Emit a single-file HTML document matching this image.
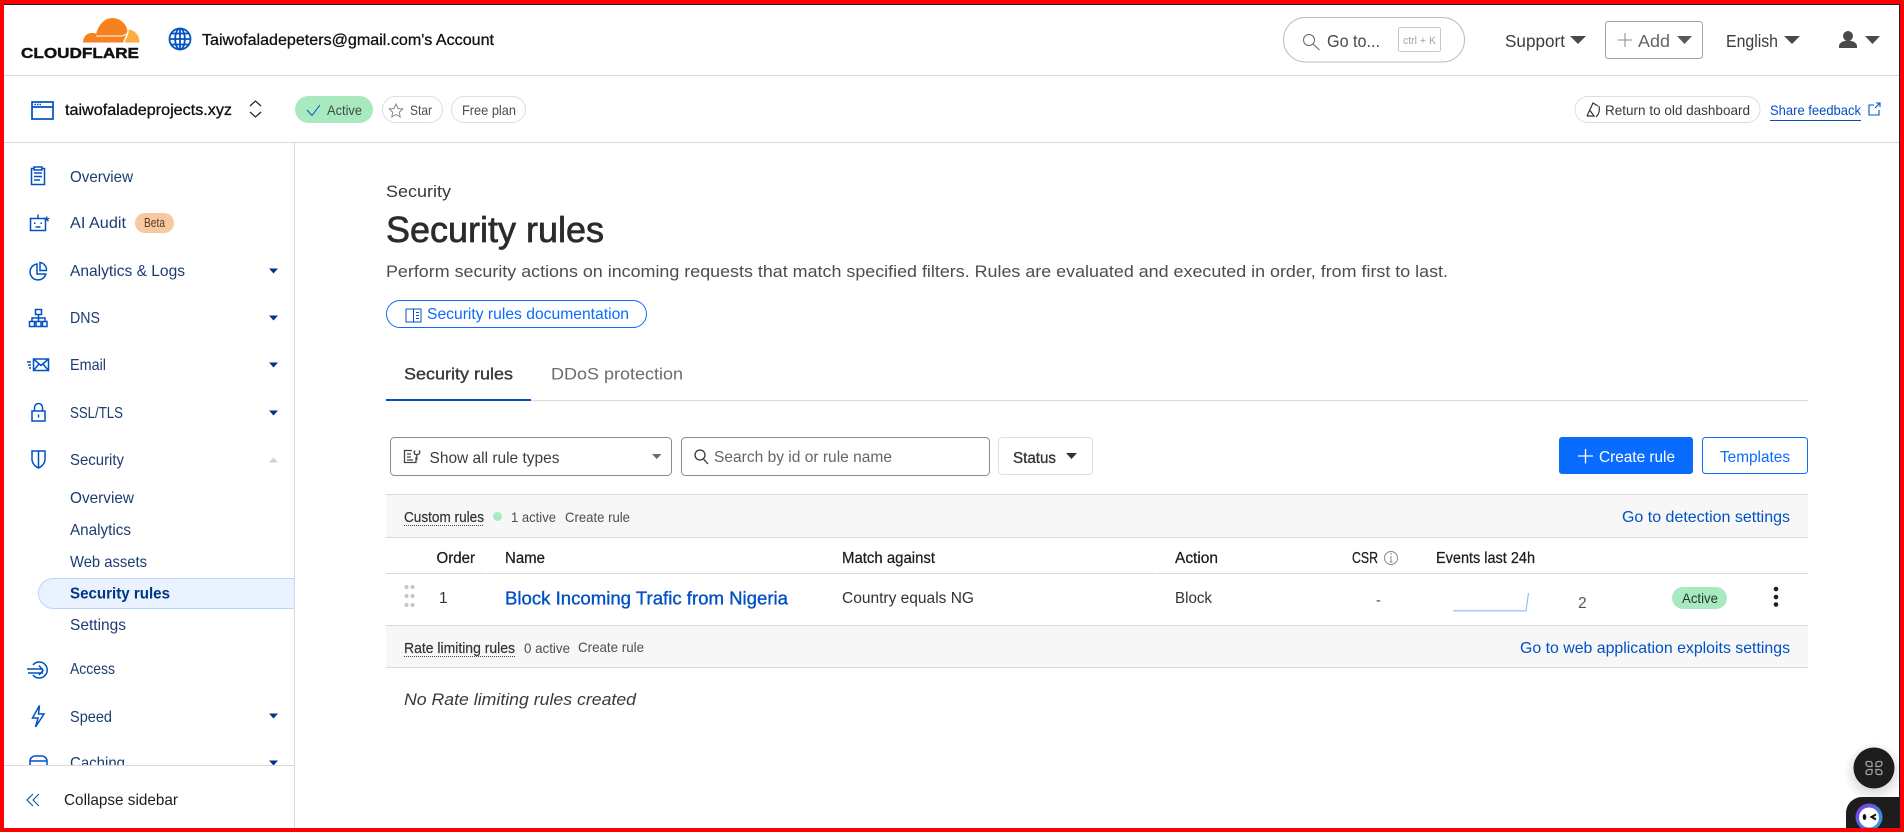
<!DOCTYPE html>
<html lang="en"><head><meta charset="utf-8"><title>Security rules | Cloudflare</title>
<style>
html,body{margin:0;padding:0;background:#fff;width:1904px;height:832px;overflow:hidden}
svg{display:block;position:absolute;left:0;top:0}
text{font-family:"Liberation Sans",sans-serif;white-space:pre}
.n{fill:#1c3c72;font-size:16px}
.m{stroke-width:.3px}
.ic{fill:none;stroke:#0051c3;stroke-width:1.5}
.hd{fill:#1d1d1d;font-size:15.5px;stroke:#1d1d1d;stroke-width:.25px}
.l{fill:#0051c3;font-size:16px}
.g{fill:#4d4d4d;font-size:14px}
</style></head><body>
<svg width="1904" height="832" viewBox="0 0 1904 832" xmlns="http://www.w3.org/2000/svg">
<defs><clipPath id="side"><rect x="0" y="140" width="294" height="625"/></clipPath>
<linearGradient id="ring" x1="0" y1="0" x2="1" y2="1"><stop offset="0" stop-color="#8a2be2"/><stop offset="1" stop-color="#19b5e6"/></linearGradient>
<radialGradient id="sh"><stop offset=".6" stop-color="#000" stop-opacity=".12"/><stop offset="1" stop-color="#000" stop-opacity="0"/></radialGradient></defs>
<rect width="1904" height="832" fill="#fff"/>

<!-- header lines -->
<rect x="4" y="75" width="1896" height="1" fill="#d9d9d9"/>
<rect x="4" y="142" width="1896" height="1" fill="#d9d9d9"/>
<rect x="294" y="142" width="1" height="686" fill="#d9d9d9"/>

<!-- logo -->
<path d="M83 42.500C83 37 86.500 33 92 33C93.500 33 95 33.200 96.200 33.800C98.500 25 104.500 18 112 18C120 18 126.200 23.500 127.500 31L123 42.500Z" fill="#f6821f"/>
<path d="M128.500 29.500C134.500 30 139.500 35 139.500 42.500H124.500L128.500 33Z" fill="#fbad41"/>
<path d="M96 36H122.500L126 34" fill="none" stroke="#fff" stroke-width="1"/>
<text x="21" y="58" font-size="14.500" font-weight="700" fill="#111" stroke="#111" stroke-width=".4" textLength="118" lengthAdjust="spacingAndGlyphs">CLOUDFLARE</text>

<!-- globe -->
<g fill="none" stroke="#0051c3" stroke-width="1.800"><circle cx="180" cy="39" r="10.500"/><ellipse cx="180" cy="39" rx="4.800" ry="10.500"/><path d="M180 28.500V49.500M169.500 39H190.500M171 33.500H189M171 44.500H189"/></g>
<text x="202" y="45" font-size="16" fill="#111" stroke="#111" class="m" textLength="292" lengthAdjust="spacingAndGlyphs">Taiwofaladepeters@gmail.com's Account</text>

<!-- goto -->
<rect x="1283.500" y="17.500" width="181" height="44.500" rx="22" fill="#fff" stroke="#bcbcbc"/>
<g fill="none" stroke="#666" stroke-width="1"><circle cx="1309" cy="40" r="5.500"/><path d="M1313 44L1319.500 50"/></g>
<text x="1327" y="47" font-size="17.500" fill="#4a4a4a" textLength="53" lengthAdjust="spacingAndGlyphs">Go to...</text>
<rect x="1398.500" y="27.500" width="42" height="24" rx="2" fill="#fff" stroke="#c8c8c8"/>
<text x="1403" y="44" font-size="11" fill="#a5a5a5" textLength="33" lengthAdjust="spacingAndGlyphs">ctrl + K</text>
<text x="1505" y="47" font-size="17.500" fill="#3c3c3c" textLength="60" lengthAdjust="spacingAndGlyphs">Support</text>
<path d="M1570 36H1586L1578 44Z" fill="#4a4a4a"/>
<rect x="1605.500" y="21.500" width="97" height="37" rx="3" fill="#fff" stroke="#a3a3a3"/>
<path d="M1625 33V47M1618 40H1632" stroke="#8a8a8a" stroke-width="1"/>
<text x="1638" y="47" font-size="17.500" fill="#666" textLength="32" lengthAdjust="spacingAndGlyphs">Add</text>
<path d="M1677 36H1692L1684.500 44Z" fill="#5a5a5a"/>
<text x="1726" y="47" font-size="17.500" fill="#3c3c3c" textLength="52" lengthAdjust="spacingAndGlyphs">English</text>
<path d="M1784 36H1800L1792 44Z" fill="#4a4a4a"/>
<circle cx="1848" cy="36" r="5" fill="#4a4a4a"/><path d="M1839 48V46C1839 43 1843 40.500 1848 40.500C1853 40.500 1857 43 1857 46V48Z" fill="#4a4a4a"/>
<path d="M1865 36H1880L1872.500 44Z" fill="#4a4a4a"/>

<!-- second bar -->
<g fill="none" stroke="#0051c3" stroke-width="1.700"><rect x="32" y="102" width="21" height="17"/><path d="M32 107H53"/></g>
<path d="M34.500 104.500H41" stroke="#0051c3" stroke-width="1.500" stroke-dasharray="1.500 1"/>
<text x="65" y="115" font-size="16" fill="#111" stroke="#111" class="m" textLength="167" lengthAdjust="spacingAndGlyphs">taiwofaladeprojects.xyz</text>
<path d="M250 106L255.500 101L261 106M250 112L255.500 117L261 112" fill="none" stroke="#222" stroke-width="1.200"/>
<rect x="295" y="96" width="78" height="27" rx="13.500" fill="#a8e9c0"/>
<path d="M307 110L312 115.500L320 105" fill="none" stroke="#0051c3" stroke-width="1"/>
<text x="327" y="115" class="g" style="fill:#3b4f44" textLength="35" lengthAdjust="spacingAndGlyphs">Active</text>
<rect x="382.500" y="96.500" width="60" height="26" rx="13" fill="#fff" stroke="#dedede"/>
<path d="M396 104L398 108.500L402.800 109L399.200 112.200L400.200 117L396 114.500L391.800 117L392.800 112.200L389.200 109L394 108.500Z" fill="none" stroke="#888"/>
<text x="410" y="115" class="g" textLength="22" lengthAdjust="spacingAndGlyphs">Star</text>
<rect x="451.500" y="96.500" width="74" height="26" rx="13" fill="#fff" stroke="#dedede"/>
<text x="462" y="115" class="g" textLength="54" lengthAdjust="spacingAndGlyphs">Free plan</text>

<rect x="1575" y="96.500" width="185" height="26" rx="13" fill="#fff" stroke="#dedede"/>
<path d="M1587 116L1593 103L1598 106M1587 116H1594L1590 110.500M1599 106C1600 110 1599 114 1596 117" fill="none" stroke="#333" stroke-width="1.200"/>
<text x="1605" y="115" class="g" style="fill:#3a3a3a" textLength="145" lengthAdjust="spacingAndGlyphs">Return to old dashboard</text>
<text x="1770" y="115" font-size="14" fill="#0051c3" textLength="91" lengthAdjust="spacingAndGlyphs">Share feedback</text>
<rect x="1770" y="120" width="91" height="1" fill="#0051c3"/>
<path d="M1874 105H1869V115H1879V110M1875 108L1880 103M1876 103H1880V107" fill="none" stroke="#0051c3" stroke-width="1.100"/>

<!-- sidebar -->
<g clip-path="url(#side)">
<g class="ic"><rect x="31.500" y="168.500" width="13" height="16"/><rect x="34" y="167" width="8" height="3" fill="#fff"/><path d="M34 173H42M34 176.500H42M34 180H40"/></g>
<text x="70" y="182" class="n" textLength="63" lengthAdjust="spacingAndGlyphs">Overview</text>

<g class="ic"><rect x="30.500" y="218.500" width="15" height="12"/><path d="M38 218.500V214.500M34 223.200H35.500M40.500 223.200H42M35.500 227H40.500"/></g>
<text x="44" y="226" font-size="14" font-weight="700" fill="#0051c3">*</text>
<text x="70" y="228" class="n" textLength="56" lengthAdjust="spacingAndGlyphs">AI Audit</text>
<rect x="135" y="213" width="39" height="20" rx="10" fill="#f8c9a0"/>
<text x="144" y="227" font-size="13" fill="#5a3b1e" textLength="21" lengthAdjust="spacingAndGlyphs">Beta</text>

<g class="ic"><path d="M37 264A8 8 0 1 0 45.800 274H37Z"/><path d="M40 262.500A7.500 7.500 0 0 1 46.500 270.500H40Z"/></g>
<text x="70" y="276" class="n" textLength="115" lengthAdjust="spacingAndGlyphs">Analytics &amp; Logs</text>
<path d="M269 268.500H278L273.500 273.500Z" fill="#003681"/>

<g class="ic" stroke-width="1.300"><rect x="35.500" y="309.500" width="6" height="5"/><rect x="29.500" y="321.500" width="5" height="5"/><rect x="36" y="321.500" width="5" height="5"/><rect x="42.500" y="321.500" width="4.500" height="5"/><path d="M38.500 314.500V321.500M32 321.500V318H45V321.500"/></g>
<text x="70" y="323" class="n" textLength="30" lengthAdjust="spacingAndGlyphs">DNS</text>
<path d="M269 315.500H278L273.500 320.500Z" fill="#003681"/>

<g class="ic"><rect x="33.500" y="359" width="15" height="11.500"/><path d="M33.500 359L41 365.500L48.500 359M33.500 370.500L39 364M48.500 370.500L43 364M27 362H31M28 365H31M29 368H31"/></g>
<text x="70" y="370" class="n" textLength="36" lengthAdjust="spacingAndGlyphs">Email</text>
<path d="M269 362.500H278L273.500 367.500Z" fill="#003681"/>

<g class="ic"><rect x="32" y="411" width="13" height="10"/><path d="M34.500 411V407.500A4 4 0 0 1 42.500 407.500V411M38.500 414.500V417.500"/></g>
<text x="70" y="418" class="n" textLength="53" lengthAdjust="spacingAndGlyphs">SSL/TLS</text>
<path d="M269 410.500H278L273.500 415.500Z" fill="#003681"/>

<g class="ic"><path d="M32 451H45V459C45 464 41 467 38.500 468C36 467 32 464 32 459Z"/><path d="M38.500 451V468"/></g>
<text x="70" y="465" class="n" textLength="54" lengthAdjust="spacingAndGlyphs">Security</text>
<path d="M269 462.500H278L273.500 457.500Z" fill="#c8d2e0"/>

<text x="70" y="503" class="n" textLength="64" lengthAdjust="spacingAndGlyphs">Overview</text>
<text x="70" y="535" class="n" textLength="61" lengthAdjust="spacingAndGlyphs">Analytics</text>
<text x="70" y="567" class="n" textLength="77" lengthAdjust="spacingAndGlyphs">Web assets</text>
<path d="M294 578.500H53.500A15 15 0 0 0 53.500 608.500H294" fill="#eaf2ff" stroke="#b9d5ff"/>
<text x="70" y="598.500" class="n" font-weight="700" style="fill:#003681" textLength="100" lengthAdjust="spacingAndGlyphs">Security rules</text>
<text x="70" y="630" class="n" textLength="56" lengthAdjust="spacingAndGlyphs">Settings</text>

<g class="ic" stroke-width="1.300"><path d="M33 665A8 8 0 1 1 33 675"/><path d="M27 669H43M28 673H43M39 665.500L43 670.500L39 675"/></g>
<text x="70" y="674" class="n" textLength="45" lengthAdjust="spacingAndGlyphs">Access</text>

<path d="M39.500 705.500L32.500 718H38L35.500 727L44 714H38.500Z" class="ic"/>
<text x="70" y="722" class="n" textLength="42" lengthAdjust="spacingAndGlyphs">Speed</text>
<path d="M269 713.500H278L273.500 718.500Z" fill="#003681"/>

<g class="ic"><path d="M30 767V761C30 758 33 756 35 756H42C44 756 47 758 47 761V767ZM30 761H47"/></g>
<text x="70" y="768" class="n" textLength="55" lengthAdjust="spacingAndGlyphs">Caching</text>
<path d="M269 760.500H278L273.500 765.500Z" fill="#003681"/>
</g>
<rect x="4" y="765" width="290" height="1" fill="#d9d9d9"/>
<path d="M33 794L27 800L33 806M39 794L33 800L39 806" fill="none" stroke="#0051c3" stroke-width="1.100"/>
<text x="64" y="805" font-size="16" fill="#1d1d1d" textLength="114" lengthAdjust="spacingAndGlyphs">Collapse sidebar</text>

<!-- main heading -->
<text x="386" y="197" font-size="16.500" fill="#36393a" textLength="65" lengthAdjust="spacingAndGlyphs">Security</text>
<text x="386" y="242" font-size="36" fill="#2b2b2b" stroke="#2b2b2b" stroke-width=".7" textLength="218" lengthAdjust="spacingAndGlyphs">Security rules</text>
<text x="386" y="277" font-size="17" fill="#4d4d4d" textLength="1062" lengthAdjust="spacingAndGlyphs">Perform security actions on incoming requests that match specified filters. Rules are evaluated and executed in order, from first to last.</text>
<rect x="386.500" y="300.500" width="260" height="27" rx="13.500" fill="#fff" stroke="#0a6cff"/>
<g fill="none" stroke="#0051c3" stroke-width="1"><path d="M406 309H421V322H406ZM413.500 309V322M416 312.500H419M416 315.500H419M416 318.500H419"/></g>
<text x="427" y="319" font-size="16" fill="#0a6cff" textLength="202" lengthAdjust="spacingAndGlyphs">Security rules documentation</text>

<!-- tabs -->
<text x="404" y="379.500" font-size="17" fill="#36393a" stroke="#36393a" stroke-width=".35" textLength="109" lengthAdjust="spacingAndGlyphs">Security rules</text>
<text x="551" y="379.500" font-size="17" fill="#6b6b6b" textLength="132" lengthAdjust="spacingAndGlyphs">DDoS protection</text>
<rect x="386" y="400" width="1422" height="1" fill="#d9d9d9"/>
<rect x="386" y="399" width="145" height="2" fill="#0051c3"/>

<!-- toolbar -->
<rect x="390.500" y="437.500" width="281" height="38" rx="4" fill="#fff" stroke="#8a8a8a"/>
<g fill="none" stroke="#444" stroke-width="1.300"><path d="M412 450.500H404.500V462.500H416V457M407 454H411M407 457H411M407 460H413"/><path d="M415 450.500C413.500 452 414 454 415.500 454.500L418 454.500C419.500 454 420.500 452 419 450.500M416.800 454.500V460"/></g>
<text x="429.500" y="463" font-size="16" fill="#3d3d3d" textLength="130" lengthAdjust="spacingAndGlyphs">Show all rule types</text>
<path d="M652 454H661.500L656.750 459Z" fill="#6b6b6b"/>
<rect x="681.500" y="437.500" width="308" height="38" rx="4" fill="#fff" stroke="#8a8a8a"/>
<g fill="none" stroke="#333" stroke-width="1.300"><circle cx="700" cy="455" r="5"/><path d="M703.500 459L708 464"/></g>
<text x="714" y="462" font-size="16" fill="#666" textLength="178" lengthAdjust="spacingAndGlyphs">Search by id or rule name</text>
<rect x="998.500" y="437.500" width="94" height="37" rx="4" fill="#fff" stroke="#dedede"/>
<text x="1013" y="463" font-size="15.500" fill="#333" stroke="#333" stroke-width=".3" textLength="43" lengthAdjust="spacingAndGlyphs">Status</text>
<path d="M1066 453H1077L1071.500 459Z" fill="#333"/>
<rect x="1559" y="437" width="134" height="37" rx="3" fill="#0a6cff"/>
<path d="M1585.500 449V463.500M1578 456H1593" stroke="#fff" stroke-width="1.300"/>
<text x="1599" y="462" font-size="16" fill="#fff" textLength="76" lengthAdjust="spacingAndGlyphs">Create rule</text>
<rect x="1702.500" y="437.500" width="105" height="36" rx="3" fill="#fff" stroke="#0a6cff"/>
<text x="1720" y="462" font-size="16" fill="#0a6cff" textLength="70" lengthAdjust="spacingAndGlyphs">Templates</text>

<!-- table -->
<rect x="386" y="495" width="1422" height="42" fill="#f7f7f7"/>
<rect x="386" y="494" width="1422" height="1" fill="#d9d9d9"/>
<rect x="386" y="537" width="1422" height="1" fill="#d9d9d9"/>
<text x="404" y="522" font-size="14.500" fill="#333" stroke="#333" stroke-width=".2" textLength="80" lengthAdjust="spacingAndGlyphs">Custom rules</text>
<path d="M404 525.500H484" stroke="#444" stroke-dasharray="1 1"/>
<circle cx="497.500" cy="516.500" r="4.500" fill="#a8e9c0"/>
<text x="511" y="522" class="g" textLength="45" lengthAdjust="spacingAndGlyphs">1 active</text>
<text x="565" y="522" class="g" textLength="65" lengthAdjust="spacingAndGlyphs">Create rule</text>
<text x="1622" y="522" class="l" textLength="168" lengthAdjust="spacingAndGlyphs">Go to detection settings</text>

<text x="436.500" y="563" class="hd" textLength="38.500" lengthAdjust="spacingAndGlyphs">Order</text>
<text x="505" y="563" class="hd" textLength="40" lengthAdjust="spacingAndGlyphs">Name</text>
<text x="842" y="563" class="hd" textLength="93" lengthAdjust="spacingAndGlyphs">Match against</text>
<text x="1175" y="563" class="hd" textLength="43" lengthAdjust="spacingAndGlyphs">Action</text>
<text x="1352" y="563" class="hd" textLength="26" lengthAdjust="spacingAndGlyphs">CSR</text>
<circle cx="1391" cy="558" r="6.500" fill="none" stroke="#888"/><path d="M1391 556V562M1389.500 562H1392.500" stroke="#888"/><circle cx="1391" cy="553.800" r=".8" fill="#888"/>
<text x="1436" y="563" class="hd" textLength="99" lengthAdjust="spacingAndGlyphs">Events last 24h</text>
<rect x="386" y="573" width="1422" height="1" fill="#d9d9d9"/>
<rect x="486" y="573" width="1" height="1" fill="#fff"/><rect x="1155" y="573" width="1" height="1" fill="#fff"/>

<g fill="#c4c4c4"><circle cx="406.500" cy="587" r="2"/><circle cx="412.500" cy="587" r="2"/><circle cx="406.500" cy="596" r="2"/><circle cx="412.500" cy="596" r="2"/><circle cx="406.500" cy="605" r="2"/><circle cx="412.500" cy="605" r="2"/></g>
<text x="439" y="603" font-size="15.500" fill="#333">1</text>
<text x="505" y="604.500" font-size="18" fill="#0051c3" stroke="#0051c3" stroke-width=".35" textLength="283" lengthAdjust="spacingAndGlyphs">Block Incoming Trafic from Nigeria</text>
<text x="842" y="603" font-size="15.500" fill="#333" textLength="132" lengthAdjust="spacingAndGlyphs">Country equals NG</text>
<text x="1175" y="603" font-size="15.500" fill="#333" textLength="37" lengthAdjust="spacingAndGlyphs">Block</text>
<text x="1376" y="605" font-size="14.500" fill="#444">-</text>
<path d="M1453 610.800H1526L1528.500 593" fill="none" stroke="#8fb8ff" stroke-width="1.100"/>
<text x="1578" y="608" font-size="15.500" fill="#555">2</text>
<rect x="1672" y="587" width="55" height="22" rx="11" fill="#a8e9c0"/>
<text x="1682" y="603" font-size="14" fill="#1f3a2b" textLength="36" lengthAdjust="spacingAndGlyphs">Active</text>
<g fill="#1d1d1d"><circle cx="1776" cy="589" r="2.300"/><circle cx="1776" cy="597" r="2.300"/><circle cx="1776" cy="604.500" r="2.300"/></g>

<rect x="386" y="625" width="1422" height="42" fill="#f7f7f7"/>
<rect x="386" y="625" width="1422" height="1" fill="#d9d9d9"/>
<rect x="386" y="667" width="1422" height="1" fill="#d9d9d9"/>
<text x="404" y="653" font-size="14.500" fill="#333" stroke="#333" stroke-width=".2" textLength="111" lengthAdjust="spacingAndGlyphs">Rate limiting rules</text>
<path d="M404 656.500H515" stroke="#444" stroke-dasharray="1 1"/>
<text x="524" y="653" class="g" textLength="46" lengthAdjust="spacingAndGlyphs">0 active</text>
<text x="578" y="652" class="g" textLength="66" lengthAdjust="spacingAndGlyphs">Create rule</text>
<text x="1520" y="653" class="l" textLength="270" lengthAdjust="spacingAndGlyphs">Go to web application exploits settings</text>
<text x="404" y="705" font-size="17" font-style="italic" fill="#3a3a3a" textLength="232" lengthAdjust="spacingAndGlyphs">No Rate limiting rules created</text>

<!-- floating -->
<circle cx="1874" cy="772" r="30" fill="url(#sh)"/>
<circle cx="1874" cy="768" r="20.500" fill="#1d1d1d"/>
<g fill="none" stroke="#a0a0a0" stroke-width="1.300"><path d="M1867 761.500H1870A2 2 0 0 1 1872 763.500V766.500H1869A3 3 0 0 1 1866 763.500 2 2 0 0 1 1867 761.500Z"/><path d="M1881 761.500H1878A2 2 0 0 0 1876 763.500V766.500H1879A3 3 0 0 0 1882 763.500 2 2 0 0 0 1881 761.500Z"/><path d="M1867 774.500H1870A2 2 0 0 0 1872 772.500V769.500H1869A3 3 0 0 0 1866 772.500 2 2 0 0 0 1867 774.500Z"/><path d="M1881 774.500H1878A2 2 0 0 1 1876 772.500V769.500H1879A3 3 0 0 1 1882 772.500 2 2 0 0 1 1881 774.500Z"/></g>
<path d="M1900 797H1862A16 16 0 0 0 1846 813V828H1900Z" fill="#1d1d1d"/>
<circle cx="1869" cy="817" r="13.500" fill="url(#ring)"/><circle cx="1869" cy="817.500" r="10" fill="#fff"/>
<ellipse cx="1864.500" cy="817" rx="1.800" ry="3" fill="#111"/><path d="M1876 814.500L1871.500 817L1876 819.500" fill="none" stroke="#111" stroke-width="2"/>

<!-- frame -->
<rect x="4" y="4" width="1896" height="1" fill="#222"/>
<rect x="1899" y="4" width="1" height="824" fill="#222"/>
<path fill-rule="evenodd" d="M0 0H1904V832H0ZM4 4V828H1900V4Z" fill="#fe0000"/>
</svg>
</body></html>
